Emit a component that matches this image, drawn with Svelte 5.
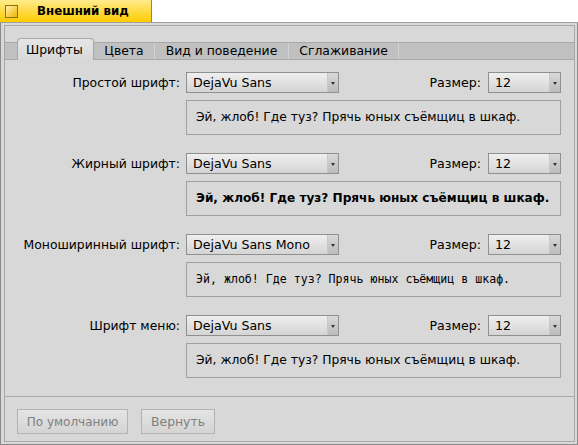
<script lang="ts">
	const tabs = ['Шрифты', 'Цвета', 'Вид и поведение', 'Сглаживание'];
	const sample = 'Эй, жлоб! Где туз? Прячь юных съёмщиц в шкаф.';
	const rows = [
		{ label: 'Простой шрифт:', font: 'DejaVu Sans', kind: 'plain' },
		{ label: 'Жирный шрифт:', font: 'DejaVu Sans', kind: 'bold' },
		{ label: 'Моноширинный шрифт:', font: 'DejaVu Sans Mono', kind: 'mono' },
		{ label: 'Шрифт меню:', font: 'DejaVu Sans', kind: 'plain' }
	];
</script>

<div class="titlebar">
	<span class="close"></span>
	<span class="title">Внешний вид</span>
</div>

<div class="window">
	<div class="inner">
		<div class="content">
			<div class="tabs">
				{#each tabs as tab, i}
					<span class="tab" class:active={i === 0}>{tab}</span>
				{/each}
			</div>

			<div class="rows">
				{#each rows as row}
					<div class="row">
						<span class="label">{row.label}</span>
						<div class="combo font-combo">
							<span class="combo__value">{row.font}</span>
							<span class="combo__arrow"></span>
						</div>
						<span class="size-label">Размер:</span>
						<div class="combo size-combo">
							<span class="combo__value">12</span>
							<span class="combo__arrow"></span>
						</div>
						<div class="preview {row.kind}">{sample}</div>
					</div>
				{/each}
			</div>
		</div>

		<div class="actions">
			<button class="btn-default" disabled>По умолчанию</button>
			<button class="btn-revert" disabled>Вернуть</button>
		</div>
	</div>
</div>

<style>
	:global(body) {
		background: #fff;
		font-family: "DejaVu Sans", sans-serif;
		font-size: 12.4px;
		color: #000;
	}

	/* Title tab */
	.titlebar {
		width: 151px;
		height: 22px;
		display: flex;
		align-items: center;
		background: linear-gradient(#ffeb8c, #ffcb00);
		border-right: 1px solid #a08a20;
	}

	.close {
		width: 11px;
		height: 11px;
		margin-left: 5px;
		border: 1px solid #8c7400;
		background: linear-gradient(135deg, #fff2b0, #f0b400);
		flex: none;
	}

	.title {
		margin-left: 19px;
		font-weight: bold;
		font-size: 11.8px;
		white-space: nowrap;
	}

	/* Window frame */
	.window {
		width: 578px;
		height: 423px;
		box-sizing: border-box;
		background: #d8d8d8;
		border-top: 1px solid #a0a0a0;
		border-left: 1px solid #8a8a8a;
		border-right: 1px solid #8a8a8a;
		border-bottom: 1px solid #8a8a8a;
		padding: 2px 2px 2px 3px;
	}

	.inner {
		height: 100%;
		box-sizing: border-box;
		border: 1px solid #a8a8a8;
		display: flex;
		flex-direction: column;
	}

	.content {
		flex: 1;
	}

	/* Tabs */
	.tabs {
		margin-top: 16px;
		height: 16px;
		padding: 0 0 0 12px;
		display: flex;
		align-items: flex-end;
		background: #c0c0c0;
		border-top: 1px solid #a8a8a8;
		border-bottom: 1px solid #a8a8a8;
	}

	.tab {
		height: 16px;
		line-height: 16px;
		padding: 0 10.5px;
		border-right: 1px solid #d4d4d4;
		white-space: nowrap;
	}

	.tab.active {
		height: 21px;
		line-height: 21px;
		margin-bottom: -1px;
		padding: 0 10px 0 8px;
		background: linear-gradient(#e6e6e6, #d8d8d8);
		border: 1px solid #a8a8a8;
		border-bottom: none;
		border-radius: 4px 4px 0 0;
	}

	/* Font rows */
	.rows {
		padding-top: 12px;
	}

	.row {
		display: grid;
		grid-template-columns: 176px 153px 1fr 73px;
		margin: 0 13px 18px 5px;
		row-gap: 7px;
		align-items: center;
	}

	.label {
		text-align: right;
		padding-right: 6px;
		white-space: nowrap;
	}

	.size-label {
		text-align: right;
		padding-right: 7px;
		font-size: 12.6px;
	}

	.combo {
		height: 21px;
		box-sizing: border-box;
		display: flex;
		border: 1px solid #909090;
		background: linear-gradient(#efefef, #d4d4d4);
	}

	.combo__value {
		flex: 1;
		line-height: 19px;
		padding-left: 6px;
		white-space: nowrap;
		font-size: 12.6px;
	}

	.combo__arrow {
		width: 10px;
		flex: none;
		border-left: 1px solid #c8c8c8;
		background: linear-gradient(#d8d8d8, #bcbcbc);
		position: relative;
	}

	.combo__arrow::after {
		content: '';
		position: absolute;
		left: 3px;
		top: 9px;
		border-left: 2.5px solid transparent;
		border-right: 2.5px solid transparent;
		border-top: 3px solid #333;
	}

	.preview {
		grid-column: 2 / 5;
		height: 35px;
		box-sizing: border-box;
		border: 1px solid #a0a0a0;
		line-height: 32px;
		padding-left: 9px;
		white-space: nowrap;
		font-size: 12.3px;
	}

	.preview.bold {
		font-weight: bold;
		font-size: 12.1px;
	}

	.preview.mono {
		font-family: "DejaVu Sans Mono", monospace;
		font-size: 11.6px;
	}

	/* Bottom buttons */
	.actions {
		border-top: 1px solid #a8a8a8;
		height: 50px;
		box-sizing: border-box;
		padding: 12px 0 0 12px;
		display: flex;
		gap: 13px;
	}

	button {
		height: 25px;
		padding: 0;
		font: inherit;
		font-size: 12px;
		color: #808080;
		background: linear-gradient(#e4e4e4, #d4d4d4);
		border: 1px solid #b4b4b4;
	}

	.btn-default {
		width: 111px;
	}

	.btn-revert {
		width: 74px;
		font-size: 12.4px;
	}
</style>
